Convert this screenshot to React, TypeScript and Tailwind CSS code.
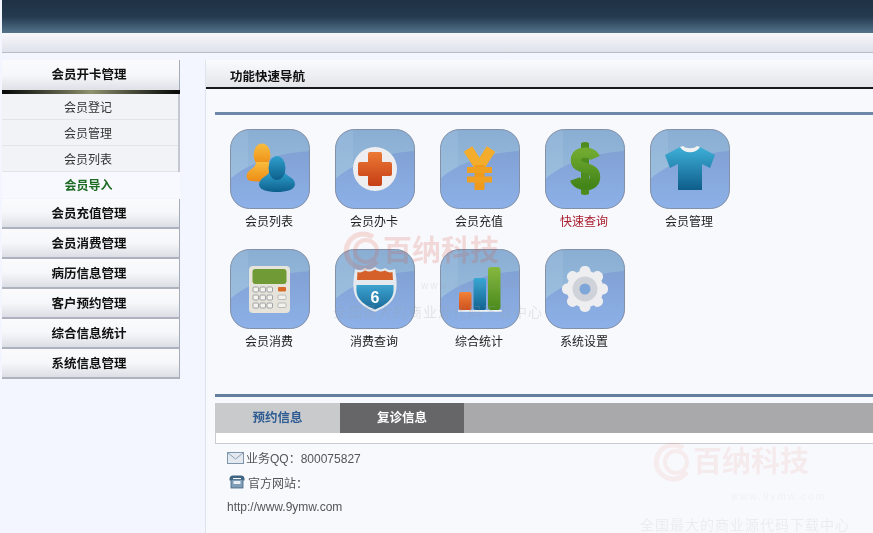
import React from "react";

const FONT = "font-['Liberation_Sans','Noto_Sans_CJK_SC',sans-serif]";

let uid = 0;

function Tile({ children }: { children: React.ReactNode }) {
  const id = React.useMemo(() => `t${uid++}`, []);
  return (
    <svg width="80" height="80" viewBox="0 0 80 80" className="block">
      <defs>
        <linearGradient id={`${id}a`} x1="0" y1="0" x2="0" y2="1">
          <stop offset="0" stopColor="#8aaed3" />
          <stop offset="0.55" stopColor="#94b9da" />
          <stop offset="1" stopColor="#a3c4e2" />
        </linearGradient>
        <linearGradient id={`${id}b`} x1="0" y1="0" x2="0" y2="1">
          <stop offset="0" stopColor="#82a1d4" />
          <stop offset="1" stopColor="#8cb1e8" />
        </linearGradient>
        <clipPath id={`${id}c`}>
          <rect x="0.5" y="0.5" width="79" height="79" rx="19" />
        </clipPath>
      </defs>
      <g clipPath={`url(#${id}c)`}>
        <rect width="80" height="80" fill={`url(#${id}a)`} />
        <rect x="0" y="0" width="18" height="50" fill="#b0cce6" opacity="0.22" />
        <path d="M0 50 C16 36 44 24 80 22 L80 80 L0 80 Z" fill={`url(#${id}b)`} />
      </g>
      <rect x="0.5" y="0.5" width="79" height="79" rx="19" fill="none" stroke="#8290a8" />
      {children}
    </svg>
  );
}

function Users() {
  return (
    <Tile>
      <defs>
        <linearGradient id="uo" x1="0" y1="0" x2="0" y2="1">
          <stop offset="0" stopColor="#f7bd3e" />
          <stop offset="1" stopColor="#ee8a12" />
        </linearGradient>
        <linearGradient id="ub" x1="0" y1="0" x2="0" y2="1">
          <stop offset="0" stopColor="#2fa0cd" />
          <stop offset="1" stopColor="#0d5f8c" />
        </linearGradient>
      </defs>
      <ellipse cx="32" cy="26" rx="8.5" ry="11.5" fill="url(#uo)" />
      <path d="M26 33 C26 38 22 39 19 42 C15 46 16 51 21 52 L34 53 L44 36 L38 33 Z" fill="url(#uo)" />
      <path d="M39 43 C39 47 29 48 29 56 C30 62 40 63 47 63 C56 63 65 61 65 55 C65 48 55 47 55 43 Z" fill="url(#ub)" />
      <ellipse cx="47" cy="39" rx="8.5" ry="12" fill="url(#ub)" />
    </Tile>
  );
}

function Plus() {
  return (
    <Tile>
      <defs>
        <linearGradient id="pl" x1="0" y1="0" x2="0" y2="1">
          <stop offset="0" stopColor="#ec7a35" />
          <stop offset="1" stopColor="#c53d15" />
        </linearGradient>
      </defs>
      <circle cx="40" cy="40" r="22" fill="#eeeef0" />
      <path d="M33 25 Q33 23 35 23 H45 Q47 23 47 25 V33 H55 Q57 33 57 35 V45 Q57 47 55 47 H47 V55 Q47 57 45 57 H35 Q33 57 33 55 V47 H25 Q23 47 23 45 V35 Q23 33 25 33 H33 Z" fill="url(#pl)" />
    </Tile>
  );
}

function Yen() {
  return (
    <Tile>
      <g fill="none">
        <path d="M28 20 L39.5 38 L51 20" strokeWidth="10" stroke="#f4ac2c" />
        <path d="M39.5 36 V61" strokeWidth="10" stroke="#ee9a1c" />
        <path d="M27 41 H52 M27 50.5 H52" strokeWidth="6" stroke="#f0a020" />
      </g>
    </Tile>
  );
}

function Dollar() {
  return (
    <Tile>
      <defs>
        <linearGradient id="dg" x1="0" y1="0" x2="0" y2="1">
          <stop offset="0" stopColor="#6fa92f" />
          <stop offset="1" stopColor="#44851a" />
        </linearGradient>
      </defs>
      <path d="M36 14 Q40 12 44 14 V65 Q40 67 36 65 Z" fill="#4d8d1f" />
      <path d="M50 29 C47 22 31 21 31 31 C31 42 50 36 50 48 C50 59 33 58 30 50" fill="none" stroke="url(#dg)" strokeWidth="10.5" />
    </Tile>
  );
}

function Shirt() {
  return (
    <Tile>
      <defs>
        <linearGradient id="sh" x1="0" y1="0" x2="0" y2="1">
          <stop offset="0" stopColor="#3eb0d8" />
          <stop offset="1" stopColor="#0e5d8a" />
        </linearGradient>
      </defs>
      <path d="M30 18 C34 24 46 24 50 18 L65 26 L60 39 L52 35 V61 H28 V35 L20 39 L15 26 Z" fill="url(#sh)" />
      <path d="M30 18 C34 25 46 25 50 18 L47 17 C44 20 36 20 33 17 Z" fill="#f0f2f4" />
    </Tile>
  );
}

function Calc() {
  const rows = [37, 45, 53];
  return (
    <Tile>
      <rect x="19" y="17" width="41" height="47" rx="4" fill="#e6e4da" />
      <rect x="22.5" y="20" width="34" height="15" rx="3" fill="#6f9a35" />
      {rows.map((y) =>
        [23, 30, 37].map((x) => (
          <rect key={`${x}-${y}`} x={x} y={y + 1} width="5.5" height="5" rx="1" fill="#f4f3ee" stroke="#8d9196" strokeWidth="0.8" />
        ))
      )}
      <rect x="48" y="38" width="8" height="4.5" rx="1" fill="#d86a2a" />
      <rect x="48" y="46" width="8" height="4.5" rx="1" fill="#f2f1ec" stroke="#a5a8ab" strokeWidth="0.7" />
      <rect x="48" y="54" width="8" height="4.5" rx="1" fill="#f2f1ec" stroke="#a5a8ab" strokeWidth="0.7" />
    </Tile>
  );
}

function Shield() {
  return (
    <Tile>
      <defs>
        <linearGradient id="sb" x1="0" y1="0" x2="0" y2="1">
          <stop offset="0" stopColor="#3da3cf" />
          <stop offset="1" stopColor="#1a6a99" />
        </linearGradient>
      </defs>
      <path d="M20 20 C24 22 27 21 30 19 C33 21 36 21 40 18 C44 21 47 21 50 19 C53 21 56 22 60 20 C62 32 63 42 58 50 C54 56 47 60 40 63 C33 60 26 56 22 50 C17 42 18 32 20 20 Z" fill="#e4e9ee" />
      <path d="M22.5 23 C25 24 28 23 30 21.5 C33 23 36 23 40 20.5 C44 23 47 23 50 21.5 C52 23 55 24 57.5 23 L58 31 H22 Z" fill="#d5602a" />
      <path d="M21.5 36 H58.5 C59 43 58 47 55.5 50 C52 55 46 58 40 60.5 C34 58 28 55 24.5 50 C22 47 21 43 21.5 36 Z" fill="url(#sb)" />
      <text x="40" y="54" textAnchor="middle" fontSize="16" fontWeight="700" fontFamily="'Liberation Sans',sans-serif" fill="#ffffff">6</text>
    </Tile>
  );
}

function Bars() {
  return (
    <Tile>
      <defs>
        <linearGradient id="b1" x1="0" y1="0" x2="0" y2="1">
          <stop offset="0" stopColor="#f0823a" />
          <stop offset="1" stopColor="#cf4f1a" />
        </linearGradient>
        <linearGradient id="b2" x1="0" y1="0" x2="0" y2="1">
          <stop offset="0" stopColor="#37a7d4" />
          <stop offset="1" stopColor="#12628f" />
        </linearGradient>
        <linearGradient id="b3" x1="0" y1="0" x2="0" y2="1">
          <stop offset="0" stopColor="#86b840" />
          <stop offset="1" stopColor="#4a8a1c" />
        </linearGradient>
      </defs>
      <rect x="19" y="43" width="12.5" height="18" rx="2" fill="url(#b1)" />
      <rect x="33.5" y="29" width="12.5" height="32" rx="2" fill="url(#b2)" />
      <rect x="48" y="18" width="12.5" height="43" rx="3" fill="url(#b3)" />
      <rect x="18" y="61" width="44" height="1.8" fill="#eef1f4" />
    </Tile>
  );
}

function Gear() {
  const a = [0, 45, 90, 135];
  return (
    <Tile>
      <g fill="#eeeef0">
        {a.map((d) => (
          <rect key={d} x="34.5" y="17" width="11" height="46" rx="5" transform={`rotate(${d} 40 40)`} />
        ))}
        <circle cx="40" cy="40" r="18.5" />
      </g>
      <circle cx="40" cy="40" r="12.5" fill="#cfd2d8" />
      <circle cx="40" cy="40" r="5.5" fill="#7fa6d8" />
    </Tile>
  );
}

const apps: { label: string; icon: React.ReactNode; red?: boolean }[] = [
  { label: "会员列表", icon: <Users /> },
  { label: "会员办卡", icon: <Plus /> },
  { label: "会员充值", icon: <Yen /> },
  { label: "快速查询", icon: <Dollar />, red: true },
  { label: "会员管理", icon: <Shirt /> },
  { label: "会员消费", icon: <Calc /> },
  { label: "消费查询", icon: <Shield /> },
  { label: "综合统计", icon: <Bars /> },
  { label: "系统设置", icon: <Gear /> },
];

function MenuButton({ label }: { label: string }) {
  return (
    <div className="h-[30px] flex items-center justify-center pr-[3px] pt-[2px] border-r border-b-2 border-r-[#a6abb8] border-b-[#aeb2bf] bg-gradient-to-b from-[#fbfbfd] via-[#f6f7fa] to-[#dcdee5] text-[12.5px] font-bold text-[#111]">
      {label}
    </div>
  );
}

function SubItem({ label }: { label: string }) {
  return (
    <div className="h-[26px] flex items-center justify-center pr-[4px] pt-[2px] border-b border-[#e2e4ea] text-[12px] text-[#333]">
      {label}
    </div>
  );
}

function Watermark({ big, sub, opacity, className }: { big: string; sub: string; opacity: string; className: string }) {
  return (
    <div className={`absolute pointer-events-none ${opacity} ${className}`}>
      <div className="flex items-center">
        <svg width="40" height="40" viewBox="0 0 40 40" className="block">
          <path d="M30 6 A17 17 0 1 0 34 30" fill="none" stroke="#e0563c" strokeWidth="5" />
          <circle cx="23" cy="20" r="11" fill="none" stroke="#e0563c" strokeWidth="4" />
        </svg>
        <span className="text-[29px] font-bold leading-none text-[#d8503a]">{big}</span>
      </div>
      <div className="mt-[10px] ml-[78px] text-[10px] leading-none tracking-[2px] text-[#8f979f]">{sub}</div>
    </div>
  );
}

export default function App() {
  return (
    <div className={`relative w-[873px] h-[533px] overflow-hidden bg-[#f3f6fe] pl-[2px] blur-[0.35px] ${FONT}`}>
      <div className="h-[33px] bg-gradient-to-b from-[#1f3144] via-[#243a4f] to-[#54748c]" />
      <div className="h-[20px] border-b border-[#b9bcc6] bg-gradient-to-b from-[#f7f8fc] to-[#dfe2ea]" />
      <div className="flex items-start pt-[7px]">
        <aside className="w-[178px] shrink-0">
          <div className="h-[30px] flex items-center justify-center pr-[3px] border-r border-[#a6abb8] bg-gradient-to-b from-[#fbfbfd] via-[#f6f7fa] to-[#dfe1e7] text-[12.5px] font-bold text-[#111]">
            会员开卡管理
          </div>
          <div className="h-[4px] bg-gradient-to-r from-[#0c0c0c] from-[2%] via-[#8f936e] to-[#0c0c0c] to-[98%]" />
          <div className="border-r-2 border-[#c4c8d3] bg-[#f2f3f7]">
            <SubItem label="会员登记" />
            <SubItem label="会员管理" />
            <SubItem label="会员列表" />
          </div>
          <div className="h-[26px] flex items-center justify-center pr-[5px] pt-[2px] text-[12px] font-bold text-[#1c6b22] bg-[#f7f9fe]">
            会员导入
          </div>
          <div className="mt-px">
            <MenuButton label="会员充值管理" />
            <MenuButton label="会员消费管理" />
            <MenuButton label="病历信息管理" />
            <MenuButton label="客户预约管理" />
            <MenuButton label="综合信息统计" />
            <MenuButton label="系统信息管理" />
          </div>
        </aside>
        <main className="ml-[25px] flex-1 h-[473px] bg-[#f8f9fd] border-l border-[#dfe3ec]">
          <div className="h-[29px] flex items-center pl-[24px] pt-[7px] border-b-2 border-[#141a1e] bg-gradient-to-b from-[#fafbfd] to-[#e3e5ea] text-[12.5px] font-bold text-[#111] rounded-tl-[3px]">
            功能快速导航
          </div>
          <div className="pl-[9px]">
            <div className="mt-[23px] h-[3px] bg-[#6d88a8]" />
            <div className="mt-[14px] pl-[15px] grid grid-cols-[repeat(5,105px)] gap-y-[19px]">
              {apps.map((a) => (
                <div key={a.label} className="w-[80px] flex flex-col items-center">
                  {a.icon}
                  <span className={`mt-[5px] mr-[2px] h-[16px] leading-[16px] text-[12px] ${a.red ? "text-[#a81c2c]" : "text-[#222]"}`}>
                    {a.label}
                  </span>
                </div>
              ))}
            </div>
            <div className="mt-[44px] h-[3px] bg-[#62809e]" />
            <div className="mt-[6px] h-[30px] flex bg-[#a9a8aa] text-[12.5px] font-bold">
              <div className="w-[125px] flex items-center justify-center bg-[#c9cacc] text-[#2e5c92]">预约信息</div>
              <div className="w-[124px] flex items-center justify-center bg-[#666568] text-white">复诊信息</div>
            </div>
            <div className="h-[11px] bg-white border-b border-l border-[#c9ccd2]" />
            <div className="pl-[12px] text-[12px] text-[#555]">
              <div className="mt-[7px] h-[16px] flex items-center">
                <svg width="17" height="12" viewBox="0 0 17 12" className="mr-[2px] -mt-[3px]">
                  <rect x="0.5" y="0.5" width="16" height="11" fill="#e4e9ef" stroke="#7e95ab" />
                  <path d="M1 1 L8.5 7 L16 1" fill="none" stroke="#8ba0b5" />
                </svg>
                业务QQ：800075827
              </div>
              <div className="mt-[9px] h-[16px] flex items-center">
                <svg width="16" height="15" viewBox="0 0 16 14" className="ml-[2px] mr-[3px] -mt-[6px]">
                  <path d="M0.5 4.5 Q0.5 1 4 1 H12 Q15.5 1 15.5 4.5 V6 H12 V3.5 H4 V6 H0.5 Z" fill="#3f6583" />
                  <rect x="2" y="5" width="12" height="8.5" fill="#7f9db6" stroke="#3f6380" strokeWidth="0.8" />
                  <rect x="4.5" y="6.5" width="7" height="3" fill="#e8eef3" />
                </svg>
                官方网站：
              </div>
              <div className="mt-[7px] h-[16px] leading-[16px]">http://www.9ymw.com</div>
            </div>
          </div>
        </main>
      </div>

      <Watermark big="百纳科技" sub="www.9ymw.com" opacity="opacity-[0.18]" className="left-[343px] top-[231px]" />
      <div className="absolute left-[333px] top-[302px] text-[14px] tracking-[1px] text-[#98a0a8] opacity-[0.24] pointer-events-none">全国最大的商业源代码下载中心</div>
      <Watermark big="百纳科技" sub="www.9ymw.com" opacity="opacity-[0.08]" className="left-[653px] top-[442px]" />
      <div className="absolute left-[640px] top-[515px] text-[14px] tracking-[1px] text-[#98a0a8] opacity-[0.14] pointer-events-none whitespace-nowrap">全国最大的商业源代码下载中心</div>
    </div>
  );
}
